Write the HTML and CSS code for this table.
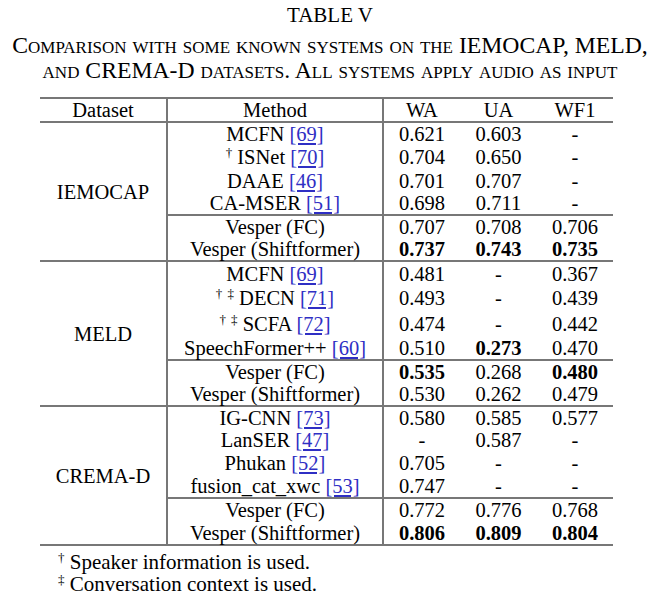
FILE: index.html
```html
<!DOCTYPE html>
<html>
<head>
<meta charset="utf-8">
<link rel="stylesheet" href="styles.css">
</head>
<body>
<div class="page">
  <div class="title">TABLE V</div>
  <div class="caption">
    <div>Comparison with some known systems on the IEMOCAP, MELD,</div>
    <div>and CREMA-D datasets. All systems apply audio as input</div>
  </div>
  <table class="results">
    <colgroup>
      <col class="c-ds"><col class="c-m"><col class="c-v"><col class="c-v"><col class="c-w">
    </colgroup>
    <thead>
      <tr class="h-head">
        <th>Dataset</th><th class="vl">Method</th><th class="vl">WA</th><th>UA</th><th>WF1</th>
      </tr>
    </thead>
    <tbody class="grp">
      <tr class="h23">
        <td rowspan="6" class="ds">IEMOCAP</td>
        <td class="vl">MCFN <a class="ref">[69]</a></td><td class="vl">0.621</td><td>0.603</td><td>-</td>
      </tr>
      <tr class="h24"><td class="vl"><sup class="dg">†</sup> ISNet <a class="ref">[70]</a></td><td class="vl">0.704</td><td>0.650</td><td>-</td></tr>
      <tr class="h23"><td class="vl">DAAE <a class="ref">[46]</a></td><td class="vl">0.701</td><td>0.707</td><td>-</td></tr>
      <tr class="h23 mid"><td class="vl">CA-MSER <a class="ref">[51]</a></td><td class="vl">0.698</td><td>0.711</td><td>-</td></tr>
      <tr class="h23"><td class="vl">Vesper (FC)</td><td class="vl">0.707</td><td>0.708</td><td>0.706</td></tr>
      <tr class="h23"><td class="vl">Vesper (Shiftformer)</td><td class="vl b">0.737</td><td class="b">0.743</td><td class="b">0.735</td></tr>
    </tbody>
    <tbody class="grp">
      <tr class="h24">
        <td rowspan="6" class="ds">MELD</td>
        <td class="vl">MCFN <a class="ref">[69]</a></td><td class="vl">0.481</td><td>-</td><td>0.367</td>
      </tr>
      <tr class="h26"><td class="vl"><sup class="dg">†</sup> <sup class="dg">‡</sup> DECN <a class="ref">[71]</a></td><td class="vl">0.493</td><td>-</td><td>0.439</td></tr>
      <tr class="h26"><td class="vl"><sup class="dg">†</sup> <sup class="dg">‡</sup> SCFA <a class="ref">[72]</a></td><td class="vl">0.474</td><td>-</td><td>0.442</td></tr>
      <tr class="h23 mid"><td class="vl">SpeechFormer++ <a class="ref">[60]</a></td><td class="vl">0.510</td><td class="b">0.273</td><td>0.470</td></tr>
      <tr class="h23"><td class="vl">Vesper (FC)</td><td class="vl b">0.535</td><td>0.268</td><td class="b">0.480</td></tr>
      <tr class="h23"><td class="vl">Vesper (Shiftformer)</td><td class="vl">0.530</td><td>0.262</td><td>0.479</td></tr>
    </tbody>
    <tbody class="grp last">
      <tr class="h22">
        <td rowspan="6" class="ds">CREMA-D</td>
        <td class="vl">IG-CNN <a class="ref">[73]</a></td><td class="vl">0.580</td><td>0.585</td><td>0.577</td>
      </tr>
      <tr class="h23"><td class="vl">LanSER <a class="ref">[47]</a></td><td class="vl">-</td><td>0.587</td><td>-</td></tr>
      <tr class="h24"><td class="vl">Phukan <a class="ref">[52]</a></td><td class="vl">0.705</td><td>-</td><td>-</td></tr>
      <tr class="h23 mid"><td class="vl">fusion_cat_xwc <a class="ref">[53]</a></td><td class="vl">0.747</td><td>-</td><td>-</td></tr>
      <tr class="h23"><td class="vl">Vesper (FC)</td><td class="vl">0.772</td><td>0.776</td><td>0.768</td></tr>
      <tr class="h24"><td class="vl">Vesper (Shiftformer)</td><td class="vl b">0.806</td><td class="b">0.809</td><td class="b">0.804</td></tr>
    </tbody>
  </table>
  <div class="notes">
    <div><sup class="dg">†</sup> Speaker information is used.</div>
    <div><sup class="dg">‡</sup> Conversation context is used.</div>
  </div>
</div>
</body>
</html>
```

FILE: styles.css
```css
html, body {
  margin: 0;
  padding: 0;
  background: #ffffff;
}

body {
  font-family: "Liberation Serif", "Times New Roman", Times, serif;
  font-size: 20.5px;
  color: #000000;
}

.page {
  width: 660px;
  padding-top: 3px;
}

.title {
  text-align: center;
  font-size: 21px;
  line-height: 25px;
  margin-bottom: 5px;
}

.caption {
  text-align: center;
  font-variant: small-caps;
  font-size: 23.7px;
  line-height: 25px;
}

.results {
  margin: 14px 0 0 40px;
  width: 573px;
  table-layout: fixed;
  border-collapse: collapse;
  border-top: 2px solid #777777;
}

.c-ds { width: 127px; }
.c-m { width: 216px; }
.c-v { width: 77px; }
.c-w { width: 76px; }

.results th,
.results td {
  padding: 0;
  text-align: center;
  vertical-align: middle;
  font-weight: normal;
  line-height: 20px;
  white-space: nowrap;
}

.results .vl {
  border-left: 2px solid #777777;
}

.h-head { height: 24px; }
.h-head th { border-bottom: 2px solid #777777; }

.h22 { height: 22px; }
.h23 { height: 23px; }
.h24 { height: 24px; }
.h25 { height: 25px; }
.h26 { height: 26px; }

.mid td { border-bottom: 2px solid #777777; }

.grp { border-bottom: 2px solid #777777; }

.results td.b { font-weight: bold; }

.ref {
  color: #2f2fc4;
  text-decoration: underline;
  text-decoration-color: #2f2fc4;
  text-underline-offset: 2px;
}

.dg {
  font-size: 13px;
  vertical-align: 7px;
  line-height: 0;
}

.notes {
  margin: 5px 0 0 58px;
  font-size: 21px;
  line-height: 22px;
}
```
